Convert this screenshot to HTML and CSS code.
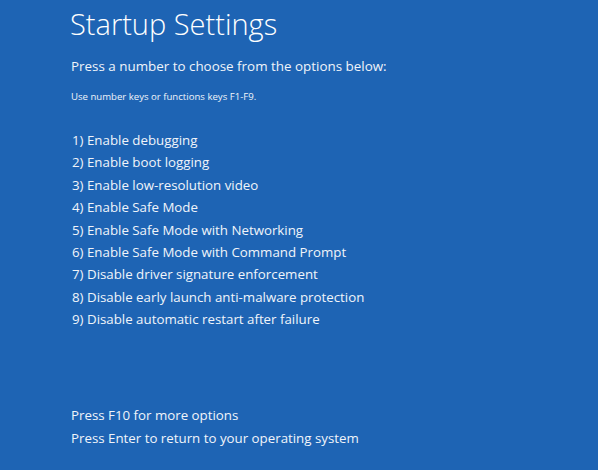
FILE: index.html
```html
<!DOCTYPE html>
<html>
<head>
<meta charset="utf-8">
<link rel="stylesheet" href="styles.css">
</head>
<body>
<div class="screen">
  <h1 class="title">Startup Settings</h1>
  <p class="lead">Press a number to choose from the options below:</p>
  <p class="hint">Use number keys or functions keys F1-F9.</p>
  <ul class="options">
    <li>1) Enable debugging</li>
    <li>2) Enable boot logging</li>
    <li>3) Enable low-resolution video</li>
    <li>4) Enable Safe Mode</li>
    <li>5) Enable Safe Mode with Networking</li>
    <li>6) Enable Safe Mode with Command Prompt</li>
    <li>7) Disable driver signature enforcement</li>
    <li>8) Disable early launch anti-malware protection</li>
    <li>9) Disable automatic restart after failure</li>
  </ul>
  <div class="footer">
    <p>Press F10 for more options</p>
    <p>Press Enter to return to your operating system</p>
  </div>
</div>
</body>
</html>
```
FILE: styles.css
```css
html, body {
  margin: 0;
  padding: 0;
  background: #1e64b4;
}
.screen {
  width: 598px;
  height: 470px;
  box-sizing: border-box;
  padding: 4px 0 0 70px;
  display: flex;
  flex-direction: column;
  color: #ffffff;
  font-family: "Open Sans", "Noto Sans", sans-serif;
}
.title {
  margin: 0;
  font-size: 29px;
  font-weight: 300;
  line-height: 40px;
}
.lead {
  margin: 12px 0 0 1px;
  font-size: 13.4px;
  line-height: 20px;
  color: #f0f4fa;
}
.hint {
  margin: 14px 0 0 1px;
  font-size: 9.6px;
  line-height: 14px;
  color: #f0f4fa;
}
.options {
  list-style: none;
  margin: 25px 0 0 2px;
  padding: 0;
  font-size: 13.3px;
  line-height: 22.4px;
  color: #f0f4fa;
}
.footer {
  margin: auto 0 0 1px;
  padding-bottom: 21px;
  font-size: 13.3px;
  line-height: 22.5px;
  color: #f0f4fa;
}
.footer p {
  margin: 0;
}
```
